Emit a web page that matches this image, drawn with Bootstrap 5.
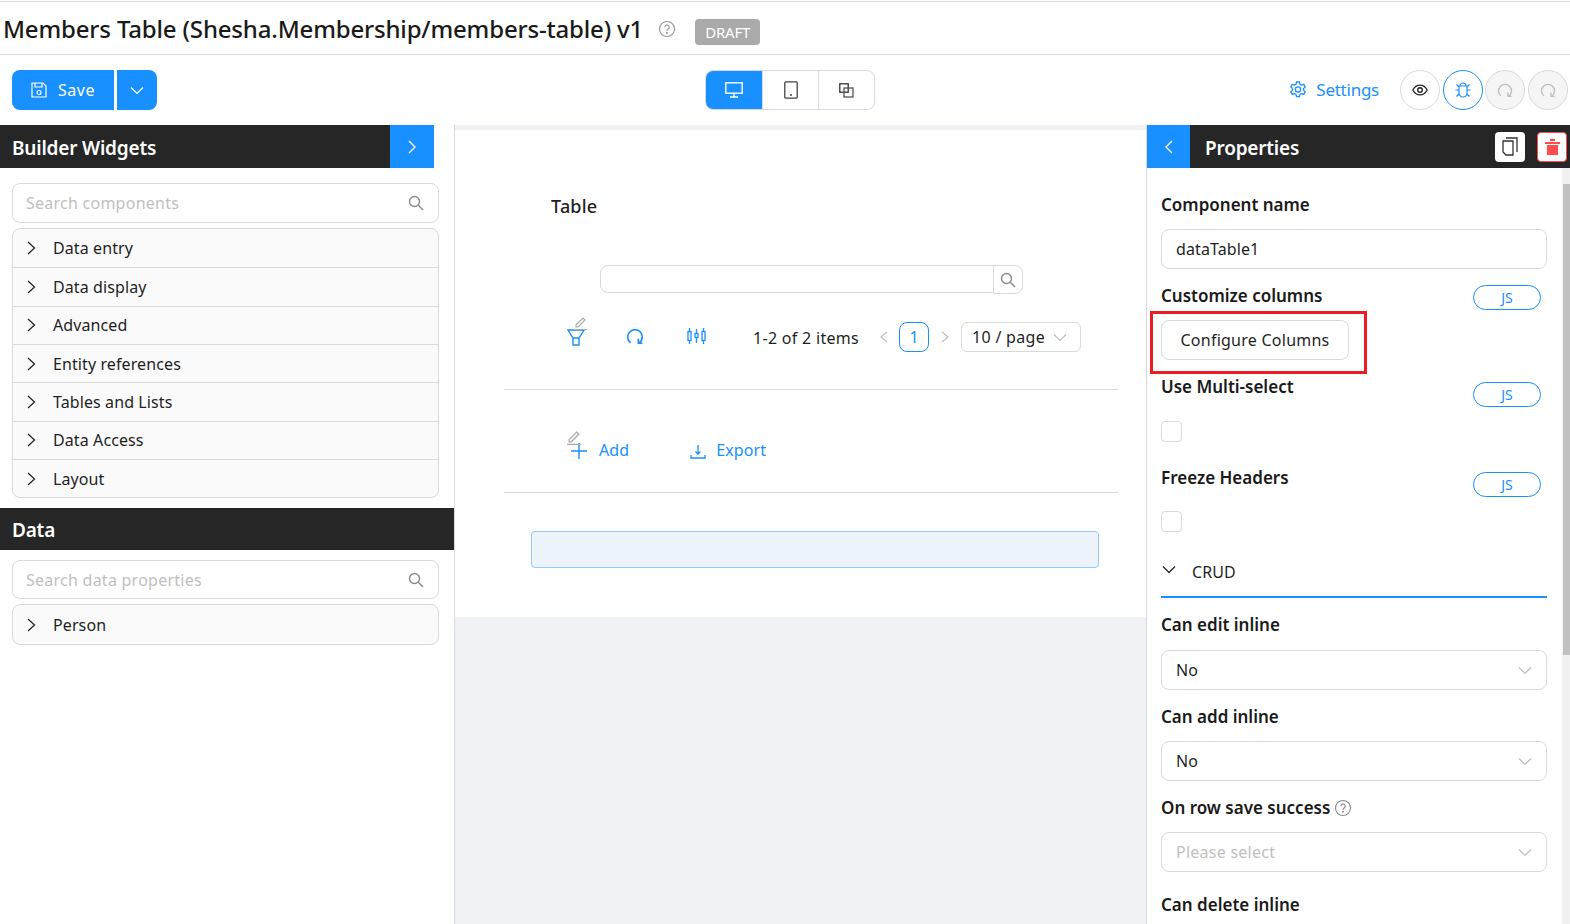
<!DOCTYPE html>
<html lang="en"><head><meta charset="utf-8"><title>Members Table</title>
<link rel="stylesheet" href="https://cdn.jsdelivr.net/npm/bootstrap@5.3.0/dist/css/bootstrap.min.css">
<style>
html,body{height:100%;overflow:hidden}
body{font-family:"Noto Sans","Open Sans",sans-serif;font-size:16px;color:#1f1f1f;background:#fff;letter-spacing:.1px}
svg{display:block;flex:none}
.pg-top{height:54px;border-top:1px solid #d9d9d9;border-bottom:1px solid #d9d9d9;padding:1px 3px 0;margin-top:1px}
.pg-title{font-size:24px;font-weight:500;letter-spacing:-.17px;color:#1a1a1a;line-height:1}
.draft{background:#aaa;color:#fff;font-size:15px;border-radius:4px;padding:0 10px;height:26px;line-height:26px;margin:6px 0 0 19px;letter-spacing:-.2px}
.tbar{height:70px;padding:0 2px 0 12px}
.tbar>*{flex:none}
.tb-left{width:693px}
.btn-save,.btn-caret{background:#1890ff;color:#fff;height:40px;border:0;display:flex;align-items:center;justify-content:center}
.btn-save{width:102px;border-radius:8px 0 0 8px;gap:11px;letter-spacing:.5px}
.btn-caret{width:40px;margin-left:3px;border-radius:0 8px 8px 0}
.seg{display:flex;width:170px;height:40px;border:1px solid #d9d9d9;border-radius:8px;overflow:hidden}
.seg>div{flex:1;display:flex;align-items:center;justify-content:center;border-left:1px solid #d9d9d9}
.seg>div:first-child{background:#1890ff;border-left:0;flex:0 0 57px;margin:-1px 0 -1px -1px}
.tb-right{margin-left:auto;gap:3px}
.settings{color:#1890ff;gap:9px;margin-right:18px;font-size:17px;letter-spacing:-.25px}
.round{width:40px;height:40px;border:1px solid #d9d9d9;border-radius:50%;display:flex;align-items:center;justify-content:center;background:#fff}
.round.act{border-color:#1890ff}
.round.dis{background:#f5f5f5}
.round-tight{margin-left:-1px}
.mainrow{height:799px}
.left{width:455px;flex:none;border-right:1px solid #d9d9d9}
.center{width:691px;flex:none;background:#f0f2f5;padding-top:5px}
.right{flex:1;border-left:1px solid #d9d9d9;position:relative;overflow:hidden}
.dark{background:#262626;color:#fff;height:42px;font-weight:600;font-size:19px;letter-spacing:-.2px}
.dark .ttl{padding:3px 0 0 12px}
.dark.dark-data .ttl{padding-top:1px}
.dark-w{width:434px;height:43px}
.bluebtn{width:44px;height:100%;background:#1890ff;display:flex;align-items:center;justify-content:center}
.inp{height:40px;border:1px solid #d9d9d9;border-radius:8px;display:flex;align-items:center;justify-content:space-between;background:#fff;padding:0 14px}
.ph{color:#bfbfbf;letter-spacing:.25px}
.left-inp{margin:15px 15px 0 12px;padding-left:13px}
.left-inp2{margin-top:10px;height:39px}
.coll{margin:5px 15px 0 12px;border:1px solid #d9d9d9;border-radius:8px;background:#fafafa}
.coll-r{height:38.35px;display:flex;align-items:center;gap:16px;padding-left:13px;border-top:1px solid #d9d9d9}
.coll-r:first-child{border-top:0}
.dark-data{margin-top:10px}
.canvas{background:#fff;height:487px;padding:0 28px 0 49px}
.tbl-lbl{font-weight:500;padding:65px 0 0 47px;line-height:22px;font-size:18px;letter-spacing:.2px;height:87px}
.srch{margin:48px 95px 0 96px;height:29px;display:flex}
.srch-a{flex:1;border:1px solid #d9d9d9;border-radius:8px 0 0 8px;height:28px}
.srch-b{width:30px;border:1px solid #d9d9d9;border-radius:0 8px 8px 0;display:flex;align-items:center;justify-content:center;margin-left:-1px}
.trow{height:96px;border-bottom:1px solid #d9d9d9;padding:28px 0 0 63px}
.trow2{height:103px;border-bottom:1px solid #d9d9d9;padding:48px 0 0 67px;color:#1890ff}
.ic-wrap{position:relative;width:20px;height:24px}
.ic-f{margin-top:4px}
.ic-top{margin-top:2px}
.ic-plus{margin-top:5px}
.pencil{position:absolute;left:7px;top:-10px}
.pencil2{left:-4px;top:-8px}
.i-re{margin:5px 0 0 39px}
.i-col{margin:6px 0 0 43px}
.pgtxt{margin:4px 0 0 47px;line-height:24px;letter-spacing:.3px}
.pgr{margin-left:20px;height:30px}
.pgn-1{width:30px;height:30px;border:1px solid #1890ff;color:#1890ff;border-radius:8px;display:flex;align-items:center;justify-content:center;margin:0 11px 0 10px}
.pgsize{width:120px;height:30px;border:1px solid #d9d9d9;border-radius:6px;margin-left:11px;padding:0 13px 0 10px;display:flex;align-items:center;justify-content:space-between;letter-spacing:.3px}
.lh24{line-height:24px}
.i-exp{margin:5px 0 0 61px}
.t-exp{margin-left:10px}
.bluebox{height:37px;margin:38px 19px 0 27px;border:1px solid #91caff;background:#edf3fb;border-radius:4px}
.rhead{height:43px}
.rhead .ttl{padding-left:15px}
.rhead .bluebtn{width:43px}
.sq{width:30px;height:30px;border-radius:4px;background:#fff;display:flex;align-items:center;justify-content:center}
.sq.del{border:1px solid #ff4d4f;margin:0 3px 0 12px}
.rbody{padding:26px 24px 0 14px;position:relative}
.fw{width:386px}
.flbl{font-weight:600;font-size:17px;line-height:22px;letter-spacing:0;color:#1a1a1a}
.pill{width:68px;height:25px;border:1px solid #1890ff;border-radius:13px;color:#1890ff;font-size:14px;display:flex;align-items:center;justify-content:center;margin-right:6px}
.chk{width:21px;height:21px;border:1px solid #d9d9d9;border-radius:4px;margin-top:14px}
.cfg{width:188px;height:40px;border:1px solid #d9d9d9;border-radius:8px;display:flex;align-items:center;justify-content:center;background:#fff;margin-top:10px;letter-spacing:.25px}
.redbox{position:absolute;left:3px;top:143px;width:217px;height:63px;border:3px solid #ed1c24;pointer-events:none}
.crud{height:45px;padding-bottom:5px;border-bottom:2px solid #1890ff;gap:16px;padding-left:1px;margin-top:21px}
.crud svg{margin-top:-4px}
.m13{margin-top:13px}.m14{margin-top:14px}.m15{margin-top:15px}.m16{margin-top:16px}.m22{margin-top:22px}
.pm1{margin-top:1px}.pm2{margin-top:2px}.pm5{margin-top:6px}.pm8{margin-top:8px}
.rowm{margin-top:13px;padding-top:1px}
.rowf{margin-top:24px}
.scr{position:absolute;right:0;top:43px;bottom:0;width:8px;background:#f1f1f1;padding-top:16px}
.scr i{display:block;background:#c1c1c1;height:471px;width:7px;margin-left:1px}
</style></head>
<body>
<div class="pg-top d-flex align-items-center">
  <span class="pg-title">Members Table (Shesha.Membership/members-table) v1</span>
  <svg style="margin-left:15px" width="18" height="18" viewBox="0 0 18 18" fill="none" stroke="#999" stroke-width="1.2"><circle cx="9" cy="9" r="7.5"/><path d="M6.8 7.2a2.2 2.2 0 1 1 3.4 1.8c-.8.5-1.2.9-1.2 1.8"/><circle cx="9" cy="12.8" r=".5"/></svg>
  <span class="draft">DRAFT</span>
</div>
<div class="tbar d-flex align-items-center">
  <div class="tb-left d-flex">
    <div class="btn-save">
      <svg width="16" height="16" viewBox="0 0 16 16" fill="none" stroke="#fff" stroke-width="1.2"><path d="M1 1h11l3 3v11H1z"/><path d="M4 1v4h7V1"/><circle cx="8" cy="10.5" r="2"/></svg>
      <span>Save</span>
    </div>
    <div class="btn-caret"><svg width="14" height="9" viewBox="0 0 14 9" fill="none" stroke="#fff" stroke-width="1.2"><path d="M1 1.5l6 6 6-6"/></svg></div>
  </div>
  <div class="seg">
    <div><svg width="18" height="16" viewBox="0 0 18 16" fill="none" stroke="#fff" stroke-width="1.4"><rect x=".8" y=".8" width="16.4" height="10.4"/><path d="M9 11.5V15M5 15h8"/></svg></div>
    <div><svg width="14" height="18" viewBox="0 0 14 18" fill="none" stroke="#444" stroke-width="1.3"><rect x=".8" y=".8" width="12.4" height="16.4" rx="1"/><circle cx="7" cy="14" r=".4"/></svg></div>
    <div><svg width="15" height="15" viewBox="0 0 15 15" fill="none" stroke="#333" stroke-width="1.3"><rect x=".8" y=".8" width="8.4" height="8.4"/><rect x="5" y="5" width="9" height="9" stroke="#555"/></svg></div>
  </div>
  <div class="tb-right d-flex align-items-center">
    <div class="settings d-flex align-items-center">
      <svg width="18" height="18" viewBox="0 0 18 18" fill="none" stroke="#1890ff" stroke-width="1.3"><path d="M7.5 1h3l.5 2.3 1.5.8 2.2-.8 1.5 2.6-1.7 1.6v1.7l1.7 1.6-1.5 2.6-2.2-.8-1.500.8-.5 2.300h-3L7 13.400l-1.500-.8-2.200.8-1.500-2.600L3.500 9.200V7.500L1.800 5.900l1.500-2.600 2.200.8L7 3.300z"/><circle cx="9" cy="8.400" r="2.600"/></svg>
      <span>Settings</span>
    </div>
    <div class="round"><svg width="16" height="12" viewBox="0 0 16 12" fill="none" stroke="#262626" stroke-width="1.4"><path d="M.8 6C4.500-.5 11.500-.5 15.200 6 11.500 12.500 4.500 12.500.8 6z"/><circle cx="8" cy="6" r="2.300"/></svg></div>
    <div class="round act"><svg width="18" height="18" viewBox="0 0 18 18" fill="none" stroke="#1890ff" stroke-width="1.2"><path d="M6 5a3 3 0 0 1 6 0M5 5h8v7a4 4 0 0 1-8 0zM5 9H1.500M13 9h3.500M5 6L2.500 3.500M13 6l2.500-2.500M5 13l-2.500 2.500M13 13l2.500 2.500"/></svg></div>
    <div class="round dis round-tight"><svg width="16" height="16" viewBox="0 0 16 16" fill="none" stroke="#bfbfbf" stroke-width="1.4"><path d="M4 14A6.500 6.500 0 1 1 12 14"/><path d="M11 10.500V14.300H14.500"/></svg></div>
    <div class="round dis"><svg width="16" height="16" viewBox="0 0 16 16" fill="none" stroke="#bfbfbf" stroke-width="1.4"><path d="M4 14A6.500 6.500 0 1 1 12 14"/><path d="M11 10.500V14.300H14.500"/></svg></div>
  </div>
</div>
<div class="mainrow d-flex">
  <div class="left">
    <div class="dark dark-w d-flex align-items-center justify-content-between">
      <span class="ttl">Builder Widgets</span>
      <div class="bluebtn"><svg width="10" height="14" viewBox="0 0 10 14" fill="none" stroke="#fff" stroke-width="1.4"><path d="M2 1l6 6-6 6"/></svg></div>
    </div>
    <div class="inp left-inp"><span class="ph">Search components</span><svg width="16" height="16" viewBox="0 0 16 16" fill="none" stroke="#8c8c8c" stroke-width="1.4"><circle cx="6.500" cy="6.500" r="5"/><path d="M10.300 10.300L15 15"/></svg></div>
    <div class="coll">
      <div class="coll-r"><svg width="11" height="14" viewBox="0 0 11 14" fill="none" stroke="#262626" stroke-width="1.3"><path d="M2 1l6.500 6L2 13"/></svg><span>Data entry</span></div>
      <div class="coll-r"><svg width="11" height="14" viewBox="0 0 11 14" fill="none" stroke="#262626" stroke-width="1.3"><path d="M2 1l6.500 6L2 13"/></svg><span>Data display</span></div>
      <div class="coll-r"><svg width="11" height="14" viewBox="0 0 11 14" fill="none" stroke="#262626" stroke-width="1.3"><path d="M2 1l6.500 6L2 13"/></svg><span>Advanced</span></div>
      <div class="coll-r"><svg width="11" height="14" viewBox="0 0 11 14" fill="none" stroke="#262626" stroke-width="1.3"><path d="M2 1l6.500 6L2 13"/></svg><span>Entity references</span></div>
      <div class="coll-r"><svg width="11" height="14" viewBox="0 0 11 14" fill="none" stroke="#262626" stroke-width="1.3"><path d="M2 1l6.500 6L2 13"/></svg><span>Tables and Lists</span></div>
      <div class="coll-r"><svg width="11" height="14" viewBox="0 0 11 14" fill="none" stroke="#262626" stroke-width="1.3"><path d="M2 1l6.500 6L2 13"/></svg><span>Data Access</span></div>
      <div class="coll-r"><svg width="11" height="14" viewBox="0 0 11 14" fill="none" stroke="#262626" stroke-width="1.3"><path d="M2 1l6.500 6L2 13"/></svg><span>Layout</span></div>
    </div>
    <div class="dark dark-data d-flex align-items-center"><span class="ttl">Data</span></div>
    <div class="inp left-inp left-inp2"><span class="ph">Search data properties</span><svg width="16" height="16" viewBox="0 0 16 16" fill="none" stroke="#8c8c8c" stroke-width="1.4"><circle cx="6.500" cy="6.500" r="5"/><path d="M10.300 10.300L15 15"/></svg></div>
    <div class="coll"><div class="coll-r"><svg width="11" height="14" viewBox="0 0 11 14" fill="none" stroke="#262626" stroke-width="1.3"><path d="M2 1l6.500 6L2 13"/></svg><span>Person</span></div></div>
  </div>
  <div class="center">
    <div class="canvas">
      <div class="tbl-lbl">Table</div>
      <div class="srch"><div class="srch-a"></div><div class="srch-b"><svg width="16" height="16" viewBox="0 0 16 16" fill="none" stroke="#8c8c8c" stroke-width="1.4"><circle cx="6.500" cy="6.500" r="5"/><path d="M10.300 10.300L15 15"/></svg></div></div>
      <div class="trow d-flex align-items-start">
        <div class="ic-wrap ic-f">
          <svg class="ic-top" width="18" height="18" viewBox="0 0 18 18" fill="none" stroke="#1890ff" stroke-width="1.400"><path d="M1 2h16l-5 8H6zM6 10v7h6v-7"/></svg>
          <svg class="pencil" width="14" height="14" viewBox="0 0 14 14" fill="none" stroke="#aaa" stroke-width="1.200"><path d="M2 9l7-7 2 2-7 7H2zM0 13.500h13"/></svg>
        </div>
        <div class="i-re"><svg width="18" height="18" viewBox="0 0 16 16" fill="none" stroke="#1890ff" stroke-width="1.500"><path d="M4 14A6.500 6.500 0 1 1 12 14"/><path d="M11 10.500V14.300H14.500"/></svg></div>
        <div class="i-col"><svg width="19" height="16" viewBox="0 0 19 16" fill="none" stroke="#1890ff" stroke-width="1.300"><rect x="1" y="3.500" width="3" height="9"/><rect x="8" y="5.500" width="3" height="4"/><rect x="15" y="3.500" width="3" height="9"/><path d="M2.500 0v3.500M2.500 12.500V16M9.500 1v4.500M9.500 9.500V15M16.500 0v3.500M16.500 12.500V16"/></svg></div>
        <span class="pgtxt">1-2 of 2 items</span>
        <div class="pgr d-flex align-items-center"><svg width="10" height="12" viewBox="0 0 10 12" fill="none" stroke="#bfbfbf" stroke-width="1.200"><path d="M8 1L2 6l6 5"/></svg><div class="pgn-1">1</div><svg width="10" height="12" viewBox="0 0 10 12" fill="none" stroke="#bfbfbf" stroke-width="1.200"><path d="M2 1l6 5-6 5"/></svg></div>
        <div class="pgsize"><span>10 / page</span><svg width="14" height="9" viewBox="0 0 14 9" fill="none" stroke="#bfbfbf" stroke-width="1.200"><path d="M1 1.500l6 6 6-6"/></svg></div>
      </div>
      <div class="trow2 d-flex align-items-start">
        <div class="ic-wrap"><svg class="ic-plus" width="16" height="16" viewBox="0 0 16 16" fill="none" stroke="#1890ff" stroke-width="1.400"><path d="M8 0v16M0 8h16"/></svg><svg class="pencil pencil2" width="15" height="15" viewBox="0 0 14 14" fill="none" stroke="#aaa" stroke-width="1.200"><path d="M2 9l7-7 2 2-7 7H2zM0 13.500h13"/></svg></div>
        <span class="ms-2 lh24">Add</span>
        <svg class="i-exp" width="16" height="16" viewBox="0 0 16 16" fill="none" stroke="#1890ff" stroke-width="1.300"><path d="M8 2v9M5.500 8.500L8 11l2.500-2.500M1 12v3h14v-3"/></svg>
        <span class="t-exp lh24">Export</span>
      </div>
      <div class="bluebox"></div>
    </div>
  </div>
  <div class="right">
    <div class="dark rhead d-flex align-items-center">
      <div class="bluebtn"><svg width="10" height="14" viewBox="0 0 10 14" fill="none" stroke="#fff" stroke-width="1.400"><path d="M8 1L2 7l6 6"/></svg></div>
      <span class="ttl">Properties</span>
      <div class="sq ms-auto"><svg width="16" height="19" viewBox="0 0 16 19" fill="none" stroke="#333" stroke-width="1.300"><path d="M4 1h11v14"/><path d="M1 4h10v14H4l-3-3z"/></svg></div>
      <div class="sq del"><svg width="15" height="16" viewBox="0 0 15 16" fill="#ff4d4f"><path d="M0 3h15v2H0zM5 0h5v2H5zM2 6h11v10H2z"/></svg></div>
    </div>
    <div class="rbody">
      <div class="flbl">Component name</div>
      <div class="inp fw m13"><span>dataTable1</span></div>
      <div class="d-flex justify-content-between fw m15"><span class="flbl pm1">Customize columns</span><span class="pill pm1">JS</span></div>
      <div class="cfg">Configure Columns</div>
      <div class="d-flex justify-content-between fw rowm"><span class="flbl pm2">Use Multi-select</span><span class="pill pm8">JS</span></div>
      <div class="chk"></div>
      <div class="d-flex justify-content-between fw rowf"><span class="flbl pm1">Freeze Headers</span><span class="pill pm5">JS</span></div>
      <div class="chk"></div>
      <div class="crud fw d-flex align-items-center">
        <svg width="14" height="10" viewBox="0 0 14 10" fill="none" stroke="#262626" stroke-width="1.300"><path d="M1 1.500l6 6 6-6"/></svg><span>CRUD</span>
      </div>
      <div class="flbl m16">Can edit inline</div>
      <div class="inp fw m14"><span>No</span><svg width="14" height="9" viewBox="0 0 14 9" fill="none" stroke="#bfbfbf" stroke-width="1.200"><path d="M1 1.500l6 6 6-6"/></svg></div>
      <div class="flbl m16">Can add inline</div>
      <div class="inp fw m13"><span>No</span><svg width="14" height="9" viewBox="0 0 14 9" fill="none" stroke="#bfbfbf" stroke-width="1.200"><path d="M1 1.500l6 6 6-6"/></svg></div>
      <div class="d-flex align-items-center gap-1 m16"><span class="flbl">On row save success</span><svg width="18" height="18" viewBox="0 0 18 18" fill="none" stroke="#8c8c8c" stroke-width="1.100"><circle cx="9" cy="9" r="7.500"/><path d="M6.800 7.200a2.200 2.200 0 1 1 3.400 1.800c-.8.500-1.200.9-1.200 1.800"/><circle cx="9" cy="12.800" r=".4"/></svg></div>
      <div class="inp fw m13"><span class="ph">Please select</span><svg width="14" height="9" viewBox="0 0 14 9" fill="none" stroke="#bfbfbf" stroke-width="1.200"><path d="M1 1.500l6 6 6-6"/></svg></div>
      <div class="flbl m22">Can delete inline</div>
      <div class="redbox"></div>
    </div>
    <div class="scr"><i></i></div>
  </div>
</div>
<script src="https://cdn.jsdelivr.net/npm/bootstrap@5.3.0/dist/js/bootstrap.bundle.min.js"></script>
</body></html>
